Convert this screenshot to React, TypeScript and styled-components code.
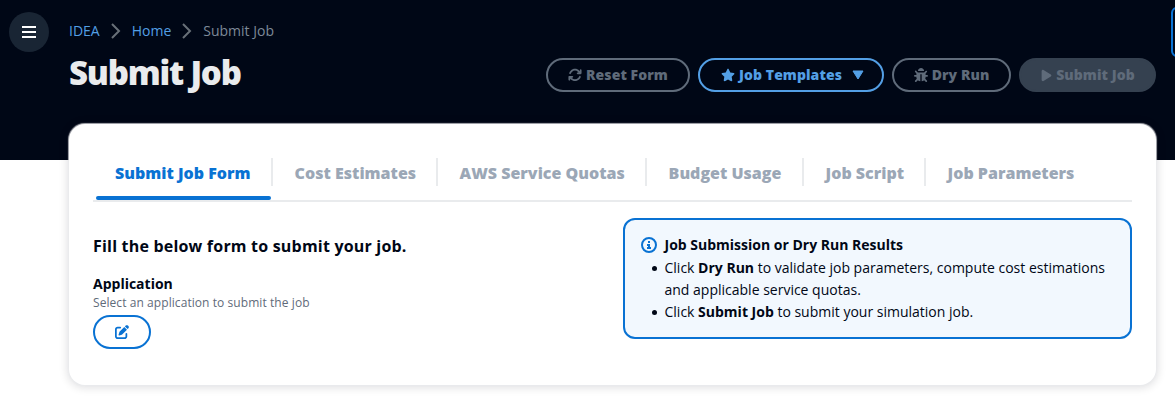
import React from "react";
import styled, { createGlobalStyle, css } from "styled-components";
import { FaArrowsRotate, FaStar, FaPlay, FaPenToSquare } from "react-icons/fa6";
import { FaBug } from "react-icons/fa";

const GlobalStyle = createGlobalStyle`
  * { box-sizing: border-box; }
  body {
    margin: 0;
    background: #fff;
    color: #000716;
    font-family: "Open Sans", "Noto Sans", sans-serif;
    font-size: 14px;
    line-height: 22px;
    overflow: hidden;
    -webkit-font-smoothing: antialiased;
  }
`;

const Page = styled.div`
  position: relative;
  height: 404px;
  overflow: hidden;
`;

const Banner = styled.header`
  display: flex;
  height: 160px;
  padding: 12px 19px 0 9px;
  background: #000716;
`;

const MenuButton = styled.button`
  display: flex;
  align-items: center;
  justify-content: center;
  flex: none;
  width: 40px;
  height: 40px;
  margin-right: 20px;
  padding: 0;
  border: 0;
  border-radius: 50%;
  background: #192534;
`;

const Heading = styled.div`
  flex: 1;
  padding-top: 8px;
`;

const Breadcrumbs = styled.nav`
  display: flex;
  align-items: center;
  height: 22px;
`;

const Crumb = styled.span<{ $current?: boolean }>`
  color: ${(p) => (p.$current ? "#7d8998" : "#539fe5")};
`;

const Separator = styled.svg`
  width: 16px;
  height: 16px;
  margin: 0 8px;
  fill: none;
  stroke: #687078;
  stroke-width: 2;
`;

const TitleRow = styled.div`
  display: flex;
  justify-content: space-between;
  margin-top: 11px;
`;

const Title = styled.h1`
  margin: 0;
  color: #e9ebed;
  font-size: 33px;
  font-weight: 800;
  line-height: 40px;
  letter-spacing: -1.2px;
`;

const Actions = styled.div`
  display: flex;
  gap: 8px;
  margin-top: 5px;
`;

const Button = styled.button<{ $kind?: "primary" | "active" | "light"; $width: number }>`
  display: flex;
  align-items: center;
  justify-content: center;
  gap: 4px;
  width: ${(p) => p.$width}px;
  height: 34px;
  padding: 0;
  border: 2px solid #5f6b7a;
  border-radius: 20px;
  background: transparent;
  color: #5f6b7a;
  font: 800 14px/22px "Open Sans", sans-serif;
  letter-spacing: 0.07px;
  white-space: nowrap;
  ${(p) => p.$kind === "active" && css`border-color: #539fe5; color: #539fe5; padding: 0 0 0 3px;`}
  ${(p) => p.$kind === "primary" && css`border-color: #354150; background: #354150; gap: 3px;`}
  ${(p) => p.$kind === "light" && css`border-color: #0972d3; color: #0972d3; background: #fff;`}
`;

const Caret = styled.svg`
  width: 12px;
  height: 10px;
  margin-left: 6px;
  fill: currentColor;
`;

const EdgePanel = styled.div`
  position: absolute;
  left: 1171px;
  top: 7px;
  width: 40px;
  height: 50px;
  border: 2px solid #0972d3;
  border-radius: 6px;
`;

const Card = styled.main`
  height: 261px;
  margin: -36px 19px 0 69px;
  padding: 23px 24px 0;
  position: relative;
  border-radius: 16px;
  background: #fff;
  box-shadow: 0 0 1px 1px rgba(233, 235, 237, 0.75), 0 1px 8px 2px rgba(0, 7, 22, 0.12);
`;

const Tabs = styled.div`
  display: flex;
  align-items: flex-start;
  height: 55px;
  padding: 11px 0 0 3px;
  border-bottom: 2px solid #e9ebed;
`;

const Tab = styled.div<{ $active?: boolean; $width: number }>`
  flex: none;
  display: flex;
  flex-direction: column;
  width: ${(p) => p.$width}px;
  height: 42px;
  color: ${(p) => (p.$active ? "#0972d3" : "#9ba7b6")};
  font-size: 16px;
  font-weight: 800;
  line-height: 24px;

  &::after {
    content: "";
    height: 4px;
    margin-top: auto;
    margin-right: 2px;
    border-radius: 2px;
    background: ${(p) => (p.$active ? "#0972d3" : "transparent")};
  }
`;

const TabLabel = styled.span<{ $last?: boolean; $first?: boolean }>`
  display: block;
  height: 28px;
  padding: 3px 0 0 ${(p) => (p.$first ? 19 : 21.6)}px;
  border-right: 2px solid ${(p) => (p.$last ? "transparent" : "#e9ebed")};
  white-space: nowrap;
`;

const Content = styled.div`
  display: flex;
  justify-content: space-between;
  padding-top: 16px;
`;

const Form = styled.section`
  padding-top: 16px;
`;

const FormTitle = styled.h2`
  margin: 0 0 16px;
  font-size: 16px;
  line-height: 24px;
  font-weight: 700;
  letter-spacing: 0.2px;
`;

const FieldLabel = styled.div`
  font-weight: 700;
  line-height: 20px;
`;

const FieldHint = styled.div`
  margin-bottom: 3px;
  color: #5f6b7a;
  font-size: 12px;
  line-height: 18px;
  letter-spacing: 0.07px;
`;

const Info = styled.aside`
  display: flex;
  width: 509px;
  height: 121px;
  padding: 14px 16px;
  border: 2px solid #0972d3;
  border-radius: 12px;
  background: #f2f8fe;
`;

const InfoIcon = styled.svg`
  flex: none;
  width: 16px;
  height: 16px;
  margin: 3px 7.5px 0 0;
`;

const InfoTitle = styled.div`
  font-weight: 700;
  line-height: 22px;
`;

const InfoList = styled.ul`
  margin: 1px 0 0;
  padding: 0;
  list-style: none;
`;

const InfoItem = styled.li`
  &::before {
    content: "";
    display: inline-block;
    width: 5px;
    height: 5px;
    margin: 0 7.5px 2px -12.5px;
    border-radius: 50%;
    background: #000716;
  }
`;

const Chevron = () => (
  <Separator viewBox="0 0 16 16">
    <path d="M4 1l7 7-7 7" />
  </Separator>
);

const tabs = [
  { label: "Submit Job Form", width: 177 },
  { label: "Cost Estimates", width: 165 },
  { label: "AWS Service Quotas", width: 209 },
  { label: "Budget Usage", width: 157 },
  { label: "Job Script", width: 122 },
  { label: "Job Parameters", width: 160 },
];

export default function App() {
  return (
    <Page>
      <GlobalStyle />
      <Banner>
        <MenuButton aria-label="Menu">
          <svg width="14" height="12" viewBox="0 0 14 12" stroke="#fff" strokeWidth="2">
            <path d="M0 1h14M0 6h14M0 11h14" />
          </svg>
        </MenuButton>
        <Heading>
          <Breadcrumbs>
            <Crumb>IDEA</Crumb>
            <Chevron />
            <Crumb>Home</Crumb>
            <Chevron />
            <Crumb $current>Submit Job</Crumb>
          </Breadcrumbs>
          <TitleRow>
            <Title>Submit Job</Title>
            <Actions>
              <Button $width={144}><FaArrowsRotate size={14} />Reset Form</Button>
              <Button $width={186} $kind="active">
                <FaStar size={14} />Job Templates
                <Caret viewBox="0 0 12 10"><path d="M1 1h10L6 9z" stroke="currentColor" strokeLinejoin="round" /></Caret>
              </Button>
              <Button $width={119}><FaBug size={14} />Dry Run</Button>
              <Button $width={137} $kind="primary"><FaPlay size={13} />Submit Job</Button>
            </Actions>
          </TitleRow>
        </Heading>
      </Banner>
      <EdgePanel />
      <Card>
        <Tabs>
          {tabs.map((t, i) => (
            <Tab key={t.label} $width={t.width} $active={i === 0}>
              <TabLabel $first={i === 0} $last={i === tabs.length - 1}>{t.label}</TabLabel>
            </Tab>
          ))}
        </Tabs>
        <Content>
          <Form>
            <FormTitle>Fill the below form to submit your job.</FormTitle>
            <FieldLabel>Application</FieldLabel>
            <FieldHint>Select an application to submit the job</FieldHint>
            <Button $width={58} $kind="light" aria-label="Edit"><FaPenToSquare size={14} /></Button>
          </Form>
          <Info>
            <InfoIcon viewBox="0 0 16 16" fill="none" stroke="#0972d3" strokeWidth="2">
              <circle cx="8" cy="8" r="7" />
              <path d="M8 11V8H6M10 11H6M9 5H7" />
            </InfoIcon>
            <div>
              <InfoTitle>Job Submission or Dry Run Results</InfoTitle>
              <InfoList>
                <InfoItem>Click <b>Dry Run</b> to validate job parameters, compute cost estimations and applicable service quotas.</InfoItem>
                <InfoItem>Click <b>Submit Job</b> to submit your simulation job.</InfoItem>
              </InfoList>
            </div>
          </Info>
        </Content>
      </Card>
    </Page>
  );
}
